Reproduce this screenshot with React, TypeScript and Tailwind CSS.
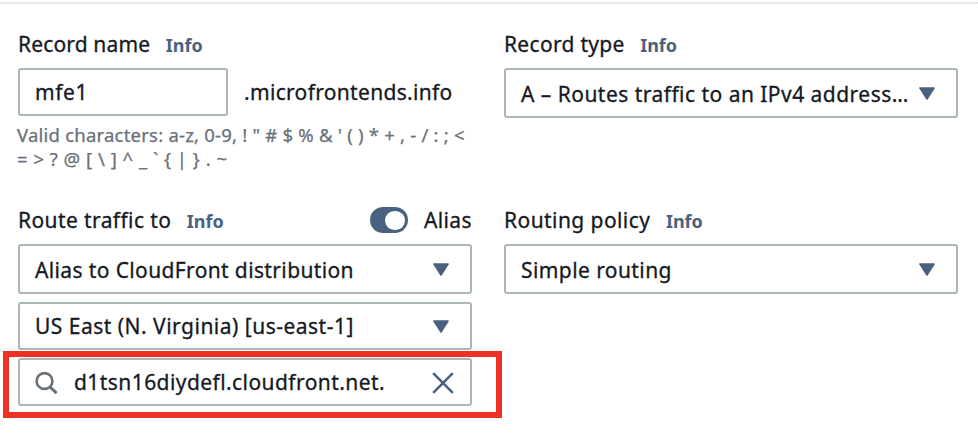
import type { ReactNode } from "react";

const text = "text-[21px] leading-7 whitespace-pre text-[#16191f] [-webkit-text-stroke:0.3px_#16191f]";

function Label({ children, spacing, gap = "ml-[15.5px]" }: { children: string; spacing: string; gap?: string }) {
  return (
    <div className="flex h-7 items-baseline">
      <span className={`${text} ${spacing}`}>{children}</span>
      <span className={`${gap} text-[18px] leading-7 font-bold text-[#48627f]`}>Info</span>
    </div>
  );
}

function Caret() {
  return (
    <svg width="16" height="13" viewBox="0 0 16 13" className="shrink-0">
      <path d="M1 1h14L8 12z" fill="#48627f" stroke="#48627f" strokeWidth="1.6" strokeLinejoin="round" />
    </svg>
  );
}

function Select({ children, height, pad = "" }: { children: ReactNode; height: string; pad?: string }) {
  return (
    <div className={`flex w-[454px] items-center justify-between rounded-[3px] border-2 border-[#aab7b8] bg-white pr-[21px] pl-[15px] ${height}`}>
      <div className={pad}>{children}</div>
      <Caret />
    </div>
  );
}

export default function App() {
  return (
    <div className="relative h-[436px] w-[978px] overflow-hidden bg-white font-['Noto_Sans',sans-serif]">
      <div className="h-[4px] pt-[2px]">
        <div className="h-[2px] bg-[conic-gradient(#dccfd4_25%,#fbf9fa_0_50%,#dccfd4_0_75%,#fbf9fa_0)] bg-[length:2px_2px]" />
      </div>
      <div className="grid grid-cols-[454px_454px] gap-x-8 px-[18px] pt-[26px]">
        <section className="h-[176px]">
          <Label spacing="tracking-[0.15px]">Record name</Label>
          <div className="mt-[10px] flex items-center">
            <div className="flex h-12 w-[210px] items-center rounded-[3px] border-2 border-[#aab7b8] pl-[15px]">
              <span className={`${text} tracking-[0.6px]`}>mfe1</span>
            </div>
            <span className={`${text} ml-[16px] tracking-[0.32px]`}>.microfrontends.info</span>
          </div>
          <div className="-ml-px mt-[7px] text-[18.5px] leading-6 whitespace-pre text-[#687078] [-webkit-text-stroke:0.25px_#687078]">
            <div className="tracking-[0.22px]">{"Valid characters: a-z, 0-9, ! \" # $ % & ' ( ) * + , - / : ; <"}</div>
            <div className="tracking-[0.5px]">{"= > ? @ [ \\ ] ^ _ ` { | } . ~"}</div>
          </div>
        </section>
        <section>
          <Label spacing="tracking-[0.3px]">Record type</Label>
          <div className="mt-[10px]">
            <Select height="h-[50px]" pad="pt-[2px]">
              <span className={`${text} tracking-[0.47px]`}>A – Routes traffic to an IPv4 address…</span>
            </Select>
          </div>
        </section>
        <section>
          <div className="flex items-center justify-between">
            <Label spacing="tracking-[0.4px]">Route traffic to</Label>
            <div className="flex items-center">
              <div className="flex h-[26px] w-[38px] items-center justify-end rounded-full bg-[#48627f] pr-[3px]">
                <div className="h-[19px] w-[20px] rounded-full bg-white" />
              </div>
              <span className={`${text} ml-[16px] tracking-[0.4px]`}>Alias</span>
            </div>
          </div>
          <div className="mt-[10px] flex flex-col gap-2">
            <Select height="h-[50px]" pad="pt-[2px]">
              <span className={`${text} tracking-[0.37px]`}>Alias to CloudFront distribution</span>
            </Select>
            <Select height="h-12">
              <span className={`${text} tracking-[0.49px]`}>US East (N. Virginia) [us-east-1]</span>
            </Select>
            <div className="flex h-12 w-[454px] items-center rounded-[3px] border-2 border-[#aab7b8] pr-[16px] pl-[15px]">
              <svg width="24" height="26" viewBox="0 0 24 26" fill="none" stroke="#687078" strokeWidth="2.6">
                <circle cx="9.5" cy="12" r="7.9" />
                <path d="M15 18l6.6 6.2" strokeWidth="3" />
              </svg>
              <span className={`${text} ml-[15px] tracking-[0.43px]`}>d1tsn16diydefl.cloudfront.net.</span>
              <svg width="22" height="24" viewBox="0 0 22 24" className="ml-auto" fill="none" stroke="#48627f" strokeWidth="2.5">
                <path d="M1.2 3.2l19.6 19.6M20.8 3.2L1.2 22.8" />
              </svg>
            </div>
          </div>
        </section>
        <section>
          <Label spacing="tracking-[0.43px]">Routing policy</Label>
          <div className="mt-[10px]">
            <Select height="h-[50px]" pad="pt-[2px]">
              <span className={`${text} tracking-[0.42px]`}>Simple routing</span>
            </Select>
          </div>
        </section>
      </div>
      <div className="absolute top-[351px] left-[3px] h-[67px] w-[499px] border-6 border-[#ee3124]" />
    </div>
  );
}
